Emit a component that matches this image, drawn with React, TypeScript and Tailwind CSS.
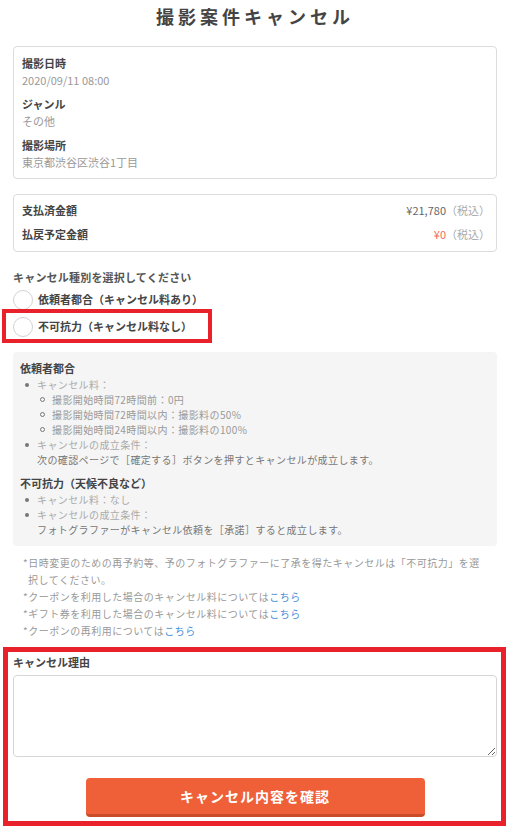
import React from 'react';

const Dot = () => (
  <span className="flex h-[15px] w-[17px] shrink-0 items-center pl-[5px]">
    <span className="block h-[4px] w-[4px] rounded-full bg-[#777]" />
  </span>
);

const Ring = () => (
  <span className="flex h-[15px] w-[15px] shrink-0 items-center pl-[3px]">
    <span className="block h-[5px] w-[5px] rounded-full border-[1.5px] border-[#777]" />
  </span>
);

const InfoItem: React.FC<{ label: string; value: string }> = ({ label, value }) => (
  <div>
    <p className="text-[11px] font-bold leading-[17px] text-[#444]">{label}</p>
    <p className="text-[11px] leading-[16px] text-[#999]">{value}</p>
  </div>
);

const Radio: React.FC<{ label: string }> = ({ label }) => (
  <label className="flex h-[27px] items-center gap-[5px]">
    <input
      type="radio"
      name="cancelType"
      className="h-[20px] w-[20px] shrink-0 appearance-none rounded-full border border-[#d2d2d2] bg-white"
    />
    <span className="text-[11px] font-bold leading-[17px] text-[#444]">{label}</span>
  </label>
);

const Link = ({ children }: { children: React.ReactNode }) => (
  <a href="#" className="text-[#4a8fd6]">
    {children}
  </a>
);

export default function App() {
  return (
    <div className="min-h-[840px] w-[532px] bg-white font-['Noto_Sans_CJK_JP','Noto_Sans',sans-serif]">
      <div className="ml-[13px] w-[484px]">
        <h1 className="pt-[6px] text-center text-[18px] font-bold leading-[20px] tracking-[4px] text-[#444]">
          撮影案件キャンセル
        </h1>

        {/* shoot info */}
        <div className="mt-[20px] flex flex-col gap-[8px] rounded-[4px] border border-[#dcdcdc] px-[8px] py-[8px]">
          <InfoItem label="撮影日時" value="2020/09/11 08:00" />
          <InfoItem label="ジャンル" value="その他" />
          <InfoItem label="撮影場所" value="東京都渋谷区渋谷1丁目" />
        </div>

        {/* amounts */}
        <div className="mt-[15px] flex flex-col gap-[7px] rounded-[4px] border border-[#dcdcdc] pb-[8px] pl-[8px] pr-[6px] pt-[7px] text-[11px] leading-[17px]">
          <div className="flex justify-between">
            <span className="font-bold text-[#444]">支払済金額</span>
            <span>
              <span className="text-[#666]">¥21,780</span>
              <span className="text-[#aaa]">（税込）</span>
            </span>
          </div>
          <div className="flex justify-between">
            <span className="font-bold text-[#444]">払戻予定金額</span>
            <span>
              <span className="text-[#f26b57]">¥0</span>
              <span className="text-[#aaa]">（税込）</span>
            </span>
          </div>
        </div>

        {/* cancel type */}
        <p className="mt-[17px] text-[11px] font-bold leading-[17px] tracking-[0.2px] text-[#555]">
          キャンセル種別を選択してください
        </p>
        <Radio label="依頼者都合（キャンセル料あり）" />
        <div className="relative">
          <Radio label="不可抗力（キャンセル料なし）" />
          <div className="pointer-events-none absolute left-[-11px] top-[-4px] h-[34px] w-[210px] border-[4px] border-[#e8212b]" />
        </div>

        {/* explanation */}
        <div className="mt-[12px] rounded-[4px] bg-[#f5f5f5] px-[7px] pb-[9px] pt-[8px] text-[10px] leading-[15px] tracking-[0.4px]">
          <p className="text-[11px] font-bold leading-[17px] tracking-normal text-[#444]">依頼者都合</p>
          <div className="flex text-[#aaa]">
            <Dot />
            <span>キャンセル料：</span>
          </div>
          <div className="pl-[17px] text-[#999]">
            <div className="flex">
              <Ring />
              <span>撮影開始時間72時間前：0円</span>
            </div>
            <div className="flex">
              <Ring />
              <span>撮影開始時間72時間以内：撮影料の50%</span>
            </div>
            <div className="flex">
              <Ring />
              <span>撮影開始時間24時間以内：撮影料の100%</span>
            </div>
          </div>
          <div className="flex text-[#aaa]">
            <Dot />
            <span>キャンセルの成立条件：</span>
          </div>
          <p className="pl-[17px] text-[#777]">次の確認ページで［確定する］ボタンを押すとキャンセルが成立します。</p>

          <p className="mt-[8px] text-[11px] font-bold leading-[17px] tracking-normal text-[#444]">
            不可抗力（天候不良など）
          </p>
          <div className="flex text-[#aaa]">
            <Dot />
            <span>キャンセル料：なし</span>
          </div>
          <div className="flex text-[#aaa]">
            <Dot />
            <span>キャンセルの成立条件：</span>
          </div>
          <p className="pl-[17px] text-[#777]">フォトグラファーがキャンセル依頼を［承諾］すると成立します。</p>
        </div>

        {/* notes */}
        <div className="mt-[8px] pl-[10px] pr-[11px] text-[10px] leading-[17px] tracking-[0.5px] text-[#999]">
          <p className="pl-[5px] -indent-[5px]">
            *日時変更のための再予約等、予のフォトグラファーに了承を得たキャンセルは「不可抗力」を選択してください。
          </p>
          <p>
            *クーポンを利用した場合のキャンセル料については<Link>こちら</Link>
          </p>
          <p>
            *ギフト券を利用した場合のキャンセル料については<Link>こちら</Link>
          </p>
          <p>
            *クーポンの再利用については<Link>こちら</Link>
          </p>
        </div>

        {/* reason */}
        <div className="relative mt-[15px]">
          <p className="text-[11px] font-bold leading-[17px] text-[#444]">キャンセル理由</p>
          <textarea className="mt-[4px] block h-[82px] w-full rounded-[4px] border border-[#d6d6d6] bg-white" />
          <div className="mt-[21px] flex justify-center">
            <button
              type="button"
              className="h-[39px] w-[339px] rounded-[4px] border-b-[3px] border-b-[#c94b27] bg-[#f06038] text-[14px] font-bold tracking-[1px] text-white"
            >
              キャンセル内容を確認
            </button>
          </div>
          <div className="pointer-events-none absolute bottom-[-9px] left-[-10px] right-[-9px] top-[-7px] border-[5px] border-[#e8212b]" />
        </div>
      </div>
    </div>
  );
}
